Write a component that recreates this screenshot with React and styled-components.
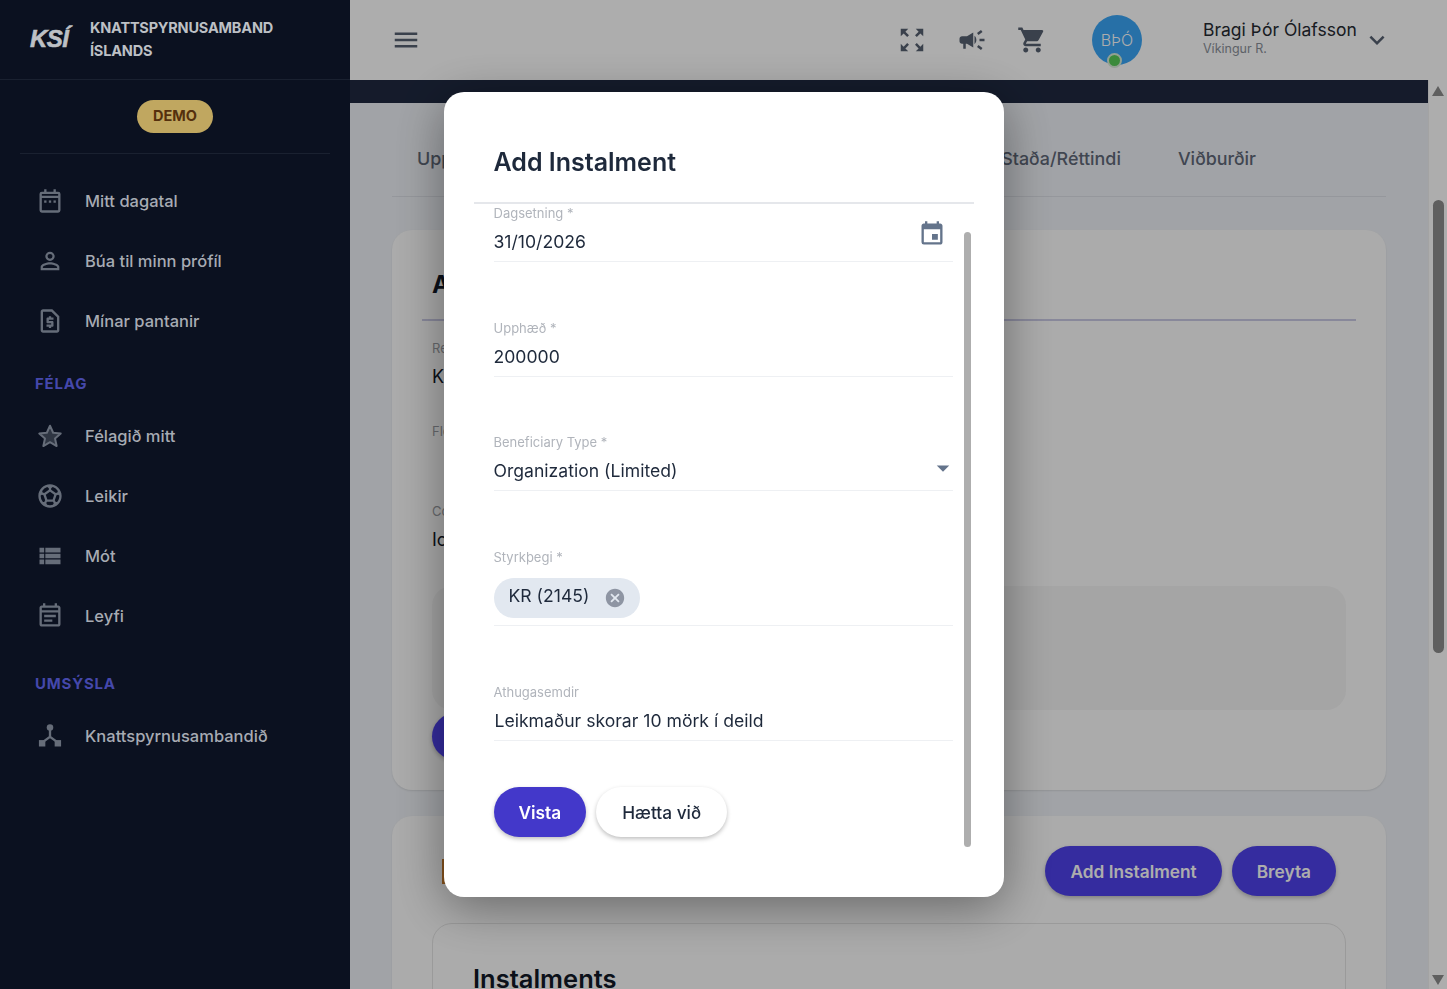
import React from 'react';
import styled, { createGlobalStyle } from 'styled-components';
import {
  MdArrowDropDown,
  MdCampaign,
  MdCancel,
  MdEvent,
  MdKeyboardArrowDown,
  MdMenu,
  MdOutlineEventNote,
  MdOutlineRequestPage,
  MdOutlineZoomOutMap,
  MdPersonOutline,
  MdShoppingCart,
  MdSportsSoccer,
  MdViewList,
} from 'react-icons/md';

const GlobalStyle = createGlobalStyle`
  html, body {
    margin: 0;
    height: 100%;
    overflow: hidden;
    font-family: Inter, "Liberation Sans", sans-serif;
    background: #eef1f6;
  }
  * {
    box-sizing: border-box;
  }
`;

function CalendarIcon() {
  return (
    <svg width="28" height="28" viewBox="0 0 24 24" fill="currentColor">
      <path d="M7 2h2v2h6V2h2v2h2a2 2 0 0 1 2 2v14a2 2 0 0 1-2 2H5a2 2 0 0 1-2-2V6a2 2 0 0 1 2-2h2zM5 9.500V20h14V9.500zM5 6v1.500h14V6z" />
      <rect x="7" y="11.500" width="2" height="2" />
      <rect x="11" y="11.500" width="2" height="2" />
      <rect x="15" y="11.500" width="2" height="2" />
    </svg>
  );
}

function StarIcon() {
  return (
    <svg width="28" height="28" viewBox="0 0 24 24">
      <path
        d="M12 3.200l2.700 6 6.500.7-4.900 4.300 1.400 6.400L12 17.300l-5.700 3.300 1.400-6.400-4.900-4.300 6.500-.7z"
        fill="currentColor"
        fillOpacity="0.4"
        stroke="currentColor"
        strokeWidth="1.700"
        strokeLinejoin="round"
      />
    </svg>
  );
}

function TreeIcon() {
  return (
    <svg width="30" height="30" viewBox="0 0 24 24" fill="currentColor">
      <circle cx="12" cy="4.800" r="2.800" />
      <path d="M11 6.500h2v5.700l5 3.600-1.200 1.600-4.800-3.500-4.800 3.500L6 15.800l5-3.600z" />
      <rect x="2.500" y="15.500" width="5.500" height="5.500" />
      <rect x="16" y="15.500" width="5.500" height="5.500" />
    </svg>
  );
}

const Page = styled.div`
  display: flex;
  width: 100%;
  height: 100vh;
  overflow: hidden;
`;

const Sidebar = styled.aside`
  position: relative;
  z-index: 20;
  flex: 0 0 350px;
  background: #0b1120;
  color: #a7abb3;
`;

const Brand = styled.div`
  display: flex;
  align-items: center;
  height: 80px;
  padding: 0 0 2px 30px;
  border-bottom: 1px solid #1a2130;
`;

const BrandMark = styled.span`
  width: 60px;
  font-family: "Liberation Sans", sans-serif;
  font-size: 24px;
  font-weight: 700;
  font-style: italic;
  letter-spacing: -0.5px;
  color: #bdc0c5;
  -webkit-text-stroke: 0.6px #bdc0c5;
`;

const BrandName = styled.div`
  font-size: 14.500px;
  line-height: 23px;
  font-weight: 700;
  color: #bdc0c5;
  letter-spacing: -0.2px;
`;

const DemoRow = styled.div`
  display: flex;
  justify-content: center;
  margin: 0 20px;
  padding: 20px 0;
  border-bottom: 1px solid #1a2130;
`;

const DemoBadge = styled.span`
  display: flex;
  align-items: center;
  justify-content: center;
  width: 76px;
  height: 33px;
  padding-bottom: 2px;
  border-radius: 17px;
  background: #c0a760;
  color: #55300d;
  font-size: 14.500px;
  font-weight: 700;
`;

const Nav = styled.nav`
  padding-top: 17px;
`;

const NavItem = styled.div`
  display: flex;
  align-items: center;
  height: 60px;
  padding-left: 36px;
  font-size: 16.500px;
  font-weight: 500;
`;

const NavIcon = styled.span`
  display: flex;
  justify-content: center;
  width: 28px;
  margin-right: 21px;
  color: #666d79;
`;

const NavSection = styled.div`
  height: 33px;
  margin: ${(p) => p.$top}px 0 6px;
  padding-left: 35px;
  line-height: 33px;
  font-size: 15px;
  font-weight: 700;
  letter-spacing: 0.8px;
  color: #4548ab;
`;

const Main = styled.main`
  flex: 1;
  display: flex;
  flex-direction: column;
  min-width: 0;
`;

const Header = styled.header`
  flex: 0 0 80px;
  display: flex;
  align-items: center;
  padding-left: 41px;
  background: #fff;
  color: #566070;
`;

const HeaderActions = styled.div`
  display: flex;
  align-items: center;
  margin-left: auto;
`;

const HeaderIcon = styled.span`
  display: flex;
  width: 30px;
  margin-left: ${(p) => p.$gap}px;
`;

const Avatar = styled.div`
  position: relative;
  display: flex;
  align-items: center;
  justify-content: center;
  width: 50px;
  height: 50px;
  margin-left: 45px;
  border-radius: 50%;
  background: #3aa6f6;
  color: #fff;
  font-size: 16px;
  font-weight: 300;
`;

const OnlineDot = styled.span`
  position: absolute;
  left: 15px;
  bottom: -3px;
  width: 15px;
  height: 15px;
  border: 2px solid #d8ecd8;
  border-radius: 50%;
  background: #58cc58;
`;

const UserBlock = styled.div`
  margin-left: 61px;
  width: 159px;
  padding-bottom: 5px;
`;

const UserName = styled.div`
  font-size: 17.500px;
  line-height: 22px;
  color: #262a32;
`;

const UserClub = styled.div`
  font-size: 12.500px;
  line-height: 16px;
  color: #8a9099;
`;

const Chevron = styled.span`
  display: flex;
  margin-right: 55px;
  color: #566070;
`;

const Body = styled.div`
  flex: 1;
  display: flex;
  min-height: 0;
`;

const Workspace = styled.div`
  flex: 1;
  min-width: 0;
  overflow: hidden;
`;

const TopStrip = styled.div`
  height: 23px;
  background: #1f2940;
`;

const Content = styled.div`
  padding: 0 42px;
`;

const Tabs = styled.div`
  display: flex;
  align-items: center;
  height: 94px;
  padding: 17px 130px 0 25px;
  border-bottom: 1px solid #dcdfe6;
  color: #5f6878;
  font-size: 17.900px;
  font-weight: 500;
`;

const Tab = styled.span`
  margin-left: ${(p) => p.$gap || 0};
`;

const Card = styled.section`
  margin-top: ${(p) => p.$top}px;
  padding: 30px 40px;
  border-radius: 20px;
  background: #fcfcfc;
  box-shadow: 0 1px 2px rgba(0, 0, 0, 0.1);
`;

const CardTitle = styled.h2`
  height: 61px;
  margin: 0 -10px;
  padding-left: 10px;
  border-bottom: 2px solid #c9c9e4;
  font-size: 24px;
  line-height: 50px;
  font-weight: 700;
  color: #111827;
`;

const Info = styled.div`
  margin-top: ${(p) => p.$top}px;
  font-size: 18px;
  color: #111827;
`;

const InfoLabel = styled.div`
  height: 27px;
  line-height: 18px;
  font-size: 13px;
  color: #9a9ca3;
`;

const InfoValue = styled.div`
  height: 24px;
`;

const Panel = styled.div`
  height: 124px;
  margin-top: 33px;
  border-radius: 20px;
  background: #f3f3f3;
`;

const PillButton = styled.button`
  height: 50px;
  padding: 0 25px;
  border: 0;
  border-radius: 25px;
  background: #4e41eb;
  color: #fff;
  font-family: inherit;
  font-size: 17.300px;
  font-weight: 600;
  box-shadow: 0 2px 4px rgba(0, 0, 0, 0.25);
`;

const CardButton = styled(PillButton)`
  display: block;
  height: 47px;
  margin-top: 3px;
`;

const ActionRow = styled.div`
  display: flex;
  align-items: center;
  gap: 10px;
  padding: 0 10px;
`;

const OrangeMark = styled.span`
  width: 24px;
  height: 25px;
  margin-right: auto;
  background: #c87a2a;
`;

const InnerCard = styled.div`
  height: 300px;
  margin-top: 27px;
  padding: 39px 40px;
  border: 1px solid #e3e3e3;
  border-radius: 20px;
  font-size: 25.500px;
  font-weight: 600;
  color: #111827;
`;

const Rail = styled.div`
  flex: 0 0 19px;
  display: flex;
  flex-direction: column;
  align-items: center;
  padding: 6px 0 4px;
  background: #fff;
  border-left: 1px solid #f0f0f0;
`;

const RailArrow = styled.span`
  width: 0;
  height: 0;
  border-left: 6px solid transparent;
  border-right: 6px solid transparent;
  border-${(p) => (p.$up ? 'bottom' : 'top')}: 10px solid #8c8c8c;
  margin-top: ${(p) => (p.$up ? '0' : 'auto')};
`;

const RailThumb = styled.div`
  width: 11px;
  height: 453px;
  margin-top: 104px;
  border-radius: 6px;
  background: #8c8c8c;
`;

const Overlay = styled.div`
  position: fixed;
  inset: 0;
  z-index: 10;
  display: flex;
  align-items: center;
  justify-content: center;
  background: rgba(0, 0, 0, 0.32);
`;

const Modal = styled.div`
  width: 560px;
  height: 805px;
  padding: 0 30px;
  border-radius: 20px;
  background: #fff;
  box-shadow: 0 10px 50px rgba(0, 0, 0, 0.4);
`;

const ModalTitle = styled.h2`
  height: 112px;
  margin: 0;
  padding: 53px 0 0 20px;
  border-bottom: 2px solid #e5e7eb;
  font-size: 25px;
  line-height: 34px;
  font-weight: 600;
  color: #1e293b;
`;

const ModalBody = styled.div`
  display: flex;
  padding-left: 20px;
`;

const Form = styled.div`
  width: 459px;
`;

const Field = styled.div`
  position: relative;
  margin-top: ${(p) => p.$top}px;
  padding-bottom: 7px;
  border-bottom: 1px solid #eef0f3;
`;

const FieldLabel = styled.div`
  height: 23px;
  line-height: 18px;
  font-size: 13px;
  color: #b0b4bb;
`;

const FieldValue = styled.div`
  height: 27px;
  padding-left: ${(p) => (p.$indent ? 1 : 0)}px;
  line-height: 30px;
  font-size: 17.600px;
  color: #1e293b;
`;

const Adornment = styled.span`
  position: absolute;
  display: flex;
  top: ${(p) => p.$top}px;
  right: ${(p) => p.$right}px;
  color: #64748b;
`;

const ChipWrap = styled.div`
  display: flex;
  margin-top: 7px;
`;

const Chip = styled.div`
  display: flex;
  align-items: center;
  height: 40px;
  padding: 0 14px 0 15px;
  border-radius: 20px;
  background: #e2e8f0;
  font-size: 17.600px;
  line-height: 36px;
  color: #1e293b;
`;

const ChipLabel = styled.span`
  height: 40px;
`;

const ChipClose = styled.span`
  display: flex;
  margin-left: 15px;
  color: #8e95a3;
`;

const FormActions = styled.div`
  display: flex;
  gap: 10px;
  margin-top: 46px;
`;

const CancelButton = styled(PillButton)`
  padding: 0 26px;
  background: #fff;
  color: #1e293b;
  font-weight: 500;
`;

const SaveButton = styled(PillButton)`
  background: #4338ca;
`;

const ModalScroll = styled.div`
  flex: 0 0 7px;
  height: 615px;
  margin: 28px 0 0 11px;
  border-radius: 4px;
  background: #aeaeae;
`;

const navTop = [
  { label: 'Mitt dagatal', icon: <CalendarIcon /> },
  { label: 'Búa til minn prófíl', icon: <MdPersonOutline size={30} /> },
  { label: 'Mínar pantanir', icon: <MdOutlineRequestPage size={28} /> },
];

const navClub = [
  { label: 'Félagið mitt', icon: <StarIcon /> },
  { label: 'Leikir', icon: <MdSportsSoccer size={30} /> },
  { label: 'Mót', icon: <MdViewList size={28} /> },
  { label: 'Leyfi', icon: <MdOutlineEventNote size={28} /> },
];

const renderNav = (items) =>
  items.map((item) => (
    <NavItem key={item.label}>
      <NavIcon>{item.icon}</NavIcon>
      {item.label}
    </NavItem>
  ));

export default function App() {
  return (
    <Page>
      <GlobalStyle />
      <Sidebar>
        <Brand>
          <BrandMark>KSÍ</BrandMark>
          <BrandName>
            KNATTSPYRNUSAMBAND
            <br />
            ÍSLANDS
          </BrandName>
        </Brand>
        <DemoRow>
          <DemoBadge>DEMO</DemoBadge>
        </DemoRow>
        <Nav>
          {renderNav(navTop)}
          <NavSection $top={16}>FÉLAG</NavSection>
          {renderNav(navClub)}
          <NavSection $top={21}>UMSÝSLA</NavSection>
          <NavItem>
            <NavIcon>
              <TreeIcon />
            </NavIcon>
            Knattspyrnusambandið
          </NavItem>
        </Nav>
      </Sidebar>

      <Main>
        <Header>
          <MdMenu size={30} />
          <HeaderActions>
            <HeaderIcon>
              <MdOutlineZoomOutMap size={30} />
            </HeaderIcon>
            <HeaderIcon $gap={30}>
              <MdCampaign size={30} />
            </HeaderIcon>
            <HeaderIcon $gap={30}>
              <MdShoppingCart size={30} />
            </HeaderIcon>
            <Avatar>
              BÞÓ
              <OnlineDot />
            </Avatar>
            <UserBlock>
              <UserName>Bragi Þór Ólafsson</UserName>
              <UserClub>Víkingur R.</UserClub>
            </UserBlock>
            <Chevron>
              <MdKeyboardArrowDown size={30} />
            </Chevron>
          </HeaderActions>
        </Header>

        <Body>
          <Workspace>
            <TopStrip />
            <Content>
              <Tabs>
                <Tab>Upplýs.</Tab>
                <Tab $gap="auto">Staða/Réttindi</Tab>
                <Tab $gap="57px">Viðburðir</Tab>
              </Tabs>

              <Card $top={33}>
                <CardTitle>Almennt</CardTitle>
                <Info $top={18}>
                  <InfoLabel>Reikningur</InfoLabel>
                  <InfoValue>KR</InfoValue>
                </Info>
                <Info $top={32}>
                  <InfoLabel>Flokkur</InfoLabel>
                  <InfoValue />
                </Info>
                <Info $top={29}>
                  <InfoLabel>Country</InfoLabel>
                  <InfoValue>Iceland</InfoValue>
                </Info>
                <Panel />
                <CardButton>Vista</CardButton>
              </Card>

              <Card $top={26}>
                <ActionRow>
                  <OrangeMark />
                  <PillButton>Add Instalment</PillButton>
                  <PillButton>Breyta</PillButton>
                </ActionRow>
                <InnerCard>Instalments</InnerCard>
              </Card>
            </Content>
          </Workspace>
          <Rail>
            <RailArrow $up />
            <RailThumb />
            <RailArrow />
          </Rail>
        </Body>
      </Main>

      <Overlay>
        <Modal>
          <ModalTitle>Add Instalment</ModalTitle>
          <ModalBody>
            <Form>
              <Field $top={0}>
                <FieldLabel>Dagsetning *</FieldLabel>
                <FieldValue>31/10/2026</FieldValue>
                <Adornment $top={16} $right={7}>
                  <MdEvent size={28} />
                </Adornment>
              </Field>
              <Field $top={57}>
                <FieldLabel>Upphæð *</FieldLabel>
                <FieldValue>200000</FieldValue>
              </Field>
              <Field $top={56}>
                <FieldLabel>Beneficiary Type *</FieldLabel>
                <FieldValue>Organization (Limited)</FieldValue>
                <Adornment $top={20} $right={-5}>
                  <MdArrowDropDown size={30} />
                </Adornment>
              </Field>
              <Field $top={57}>
                <FieldLabel>Styrkþegi *</FieldLabel>
                <ChipWrap>
                  <Chip>
                    <ChipLabel>KR (2145)</ChipLabel>
                    <ChipClose>
                      <MdCancel size={22} />
                    </ChipClose>
                  </Chip>
                </ChipWrap>
              </Field>
              <Field $top={57}>
                <FieldLabel>Athugasemdir</FieldLabel>
                <FieldValue $indent>Leikmaður skorar 10 mörk í deild</FieldValue>
              </Field>
              <FormActions>
                <SaveButton>Vista</SaveButton>
                <CancelButton>Hætta við</CancelButton>
              </FormActions>
            </Form>
            <ModalScroll />
          </ModalBody>
        </Modal>
      </Overlay>
    </Page>
  );
}
